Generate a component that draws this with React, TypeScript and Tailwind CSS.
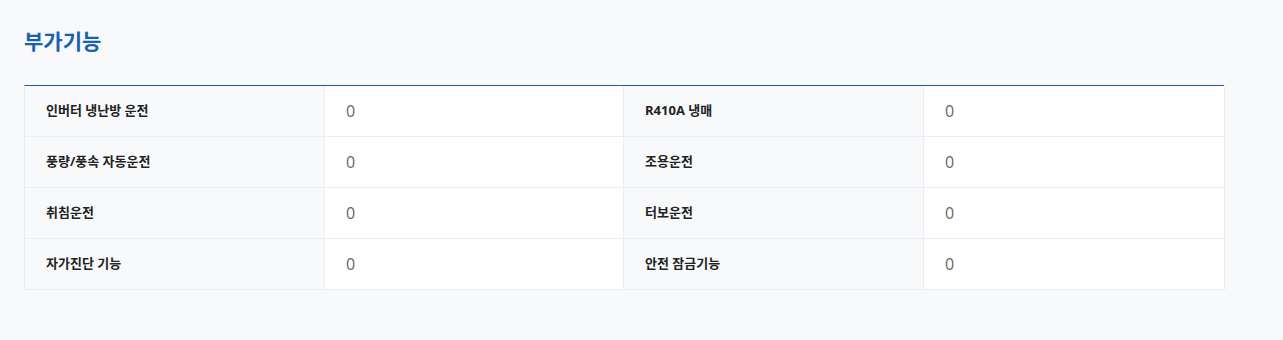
const rows: [string, string, string, string][] = [
  ["인버터 냉난방 운전", "0", "R410A 냉매", "0"],
  ["풍량/풍속 자동운전", "0", "조용운전", "0"],
  ["취침운전", "0", "터보운전", "0"],
  ["자가진단 기능", "0", "안전 잠금기능", "0"],
];

function Label({ text }: { text: string }) {
  return (
    <div className="flex items-center pl-[21px] bg-[#f8f9fb] border-r border-b border-[#ebedf0] text-[13px] font-bold text-[#222]">
      {text}
    </div>
  );
}

function Value({ text }: { text: string }) {
  return (
    <div className="flex items-center pl-[21px] bg-white border-r border-b border-[#ebedf0] text-[16px] text-[#666]">
      {text}
    </div>
  );
}

export default function App() {
  return (
    <div
      className="w-[1283px] h-[340px] bg-[#f8f9fb] pl-6 pt-[27px]"
      style={{ fontFamily: '"Open Sans", "Noto Sans CJK KR", sans-serif' }}
    >
      <h2 className="text-[21px] font-bold text-[#1862ae] leading-[28px]">부가기능</h2>
      <div className="mt-[30px] w-[1200px] border-t border-[#1d5aa0] border-l border-l-[#ebedf0] grid grid-cols-[300px_299px_300px_301px] auto-rows-[51px]">
        {rows.map((r) => (
          <div key={r[0]} className="contents">
            <Label text={r[0]} />
            <Value text={r[1]} />
            <Label text={r[2]} />
            <Value text={r[3]} />
          </div>
        ))}
      </div>
    </div>
  );
}
